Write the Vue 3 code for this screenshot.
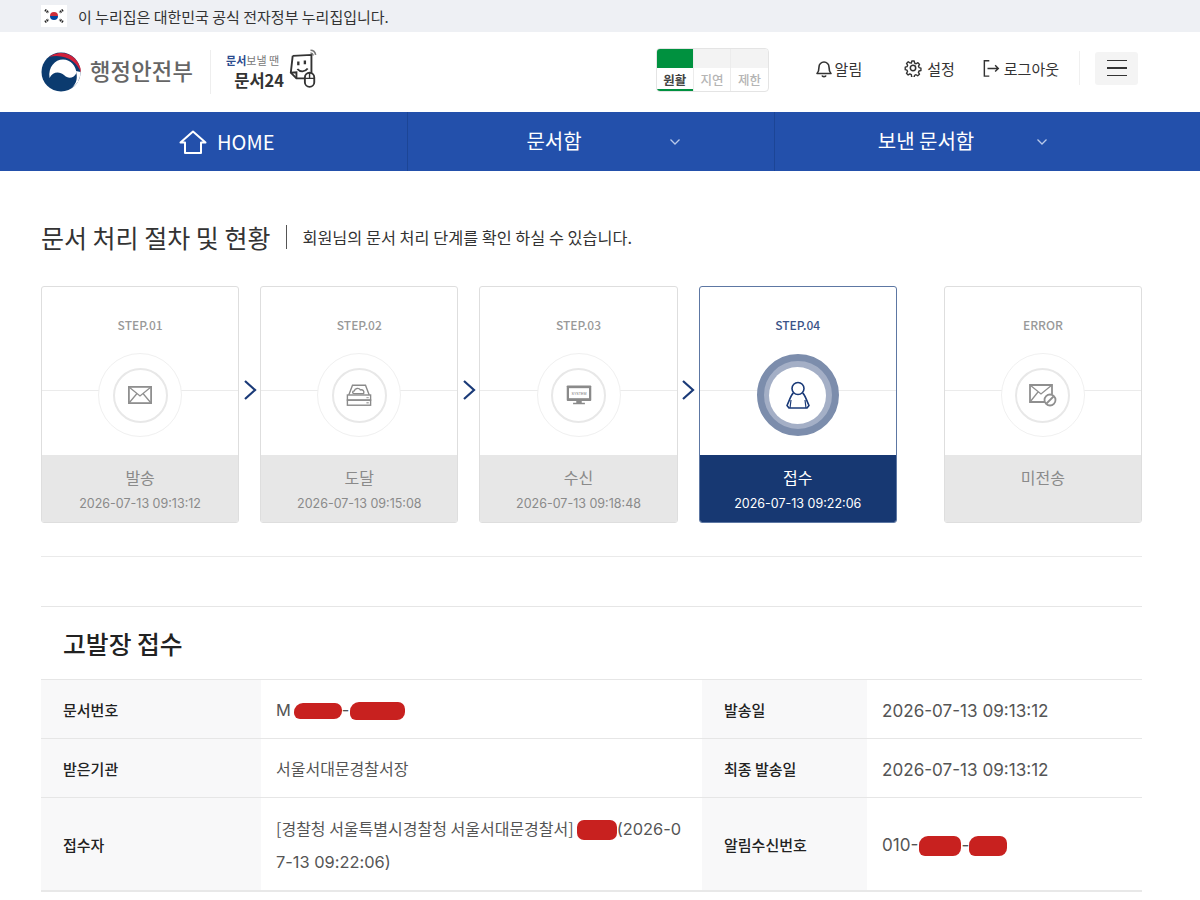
<template>
  <div class="page">
    <div class="gov-bar">
      <svg class="flag" viewBox="0 0 26 22" width="26" height="22">
        <rect width="26" height="22" fill="#fff" />
        <path d="M9 11a4 4 0 0 1 8 0z" fill="#cd2e3a" />
        <path d="M9 11a4 4 0 0 0 8 0z" fill="#0047a0" />
        <g stroke="#222" stroke-width="2.4" stroke-dasharray="1.4 .6">
          <path d="M4 5l3.5 2.5M4 17l3.5-2.5M22 5l-3.5 2.5M22 17l-3.5-2.5" />
        </g>
      </svg>
      <span>이 누리집은 대한민국 공식 전자정부 누리집입니다.</span>
    </div>

    <header class="header">
      <div class="brand">
        <svg class="mark" viewBox="0 0 40 40" width="40" height="40">
          <circle cx="20" cy="20" r="19.500" fill="#0b3b6f" />
          <path d="M8 5A20 20 0 0 1 40 21C37 11 25 1 8 5z" fill="#d0203a" />
          <path d="M8.500 26C7 15 14 7.500 22 7.500C30 7.500 35 14 35.500 21C32 27 27 27 23 23C19 19.500 12 19 8.500 26z" fill="#fff" />
          <path d="M35 19L39.500 20A19.500 19.500 0 0 1 30 36.500C36.500 31 36.500 25 35 19z" fill="#fff" />
        </svg>
        <span class="ministry">행정안전부</span>
        <i class="brand-sep"></i>
        <div class="doc-logo">
          <div class="doc-tag"><b>문서</b>보낼 땐</div>
          <div class="doc-name">문서24</div>
        </div>
        <svg class="doc-icon" viewBox="0 0 32 44" width="30" height="42">
          <g fill="none" stroke="#333" stroke-width="2">
            <path d="M5 8L25 7V28M18 32H9L3 26L5 8" />
            <path d="M3 26L9 25.500V32" />
            <path d="M10 22c3 3.500 8 3.500 11-.5" />
            <rect x="18" y="26" width="10" height="15" rx="5" fill="#fff" />
            <path d="M23 26v6M18 32h10" stroke-width="1.500" />
          </g>
          <path d="M11 14v4M18 13v4" stroke="#333" stroke-width="2.500" />
          <path d="M24 2c3 0 5 2 5.500 5M24 5c1.500 0 2.500 1 3 2.500" fill="none" stroke="#777" stroke-width="1.700" />
        </svg>
      </div>

      <div class="tools">
        <div class="status">
          <div v-for="(s, i) in statusList" :key="s" class="status-col" :class="{ on: i === 0 }">
            <i></i>
            <span>{{ s }}</span>
          </div>
        </div>
        <a class="tool tool-bell">
          <svg viewBox="0 0 18 20" width="18" height="20" fill="none" stroke="#333" stroke-width="1.600">
            <path d="M2 15.500c1.500-1.500 2-3 2-6.500a5 5 0 0 1 10 0c0 3.500.5 5 2 6.500z" stroke-linejoin="round" />
            <path d="M7 17.500c.5 1.500 3.500 1.500 4 0" />
          </svg>
          알림
        </a>
        <a class="tool tool-gear">
          <svg viewBox="0 0 20 20" width="18" height="18" fill="none" stroke="#333" stroke-width="1.700">
            <circle cx="10" cy="10" r="3" />
            <path d="M8.500 1.500h3l.5 2.500 1.800.8 2.200-1.300 2 2.200-1.300 2.100.7 1.700 2.300.6v3l-2.400.6-.7 1.700 1.300 2.100-2.200 2-2-1.300-1.800.8-.5 2.400h-3L8 18l-1.800-.8-2.100 1.300-2.100-2.100L3.300 14.300 2.600 12.600.5 12V9l2.200-.6.7-1.800L2.100 4.500l2.100-2.100 2 1.300L8 3.900z" transform="translate(.9 .9) scale(.91)" stroke-linejoin="round" />
          </svg>
          설정
        </a>
        <a class="tool tool-out">
          <svg viewBox="0 0 20 20" width="18" height="20" fill="none" stroke="#333" stroke-width="1.600">
            <path d="M7 2H1.500v17H7" />
            <path d="M5 10.500h12M13.500 7l3.500 3.500L13.500 14" />
          </svg>
          로그아웃
        </a>
        <i class="tool-sep"></i>
        <button class="menu-btn" type="button"><i></i><i></i><i></i></button>
      </div>
    </header>

    <nav class="nav">
      <a class="nav-item nav-home">
        <svg viewBox="0 0 28 24" width="28" height="24" fill="none" stroke="#fff" stroke-width="2">
          <path d="M1.500 12.500L14 1.500l12.500 11H22V23H6V12.500z" stroke-linejoin="round" />
        </svg>
        <span>HOME</span>
      </a>
      <a v-for="item in navItems" :key="item" class="nav-item">
        <span class="nav-label">{{ item }}</span>
        <svg viewBox="0 0 12 8" width="12" height="8" fill="none" stroke="#b9c9ea" stroke-width="1.300">
          <path d="M1.500 1.500L6 6l4.500-4.500" />
        </svg>
      </a>
    </nav>

    <main class="content">
      <div class="page-head">
        <h1>문서 처리 절차 및 현황</h1>
        <p>회원님의 문서 처리 단계를 확인 하실 수 있습니다.</p>
      </div>

      <section class="steps">
        <template v-for="(step, i) in steps" :key="step.code">
          <div v-if="i > 0" class="step-gap" :class="{ wide: step.code === 'ERROR' }">
            <svg v-if="step.code !== 'ERROR'" viewBox="0 0 14 20" width="14" height="20" fill="none" stroke="#1a3a78" stroke-width="2.200">
              <path d="M2 1l10 9-10 9" />
            </svg>
          </div>
          <article class="card" :class="{ active: step.active }">
            <div class="card-top">
              <div class="step-code">{{ step.code }}</div>
              <div class="rule"></div>
              <div class="orbit">
                <div class="core">
                  <svg v-if="step.icon === 'mail'" viewBox="0 0 24 18" width="24" height="18" fill="none" stroke="#8f8f8f" stroke-width="1.800">
                    <rect x=".9" y=".9" width="22.200" height="16.200" />
                    <path d="M1 1l11 9 11-9M1 17l8-9.500M23 17l-8-9.500" stroke-width="1.300" />
                  </svg>
                  <svg v-else-if="step.icon === 'tray'" viewBox="0 0 28 24" width="26" height="24" fill="none" stroke="#8a8a8a" stroke-width="1.500">
                    <path d="M3 12L7 1.500h14L25 12" />
                    <path d="M9 10.500c-2.500 0-2.500-3 0-3 .5-3 5-3.500 6.500-1 2.500-.5 4.500 1 3.500 4z" />
                    <rect x="1.500" y="12" width="25" height="5.500" />
                    <rect x="1.500" y="17.500" width="25" height="5.500" />
                    <path d="M22 14.800h2.500M22 20.300h2.500" stroke="#aaa" stroke-width="1.500" />
                  </svg>
                  <svg v-else-if="step.icon === 'system'" viewBox="0 0 28 22" width="26" height="20">
                    <rect x=".5" y=".5" width="27" height="17" rx="1" fill="#8a8a8a" />
                    <rect x="3" y="3.500" width="22" height="11" fill="#fff" />
                    <text x="14" y="10.500" class="screen-text" text-anchor="middle">SYSTEM</text>
                    <path d="M11 17.500h6v2h-6zM7.500 19.500h13v1.700h-13z" fill="#8a8a8a" />
                  </svg>
                  <svg v-else-if="step.icon === 'person'" viewBox="0 0 26 28" width="26" height="28" fill="none" stroke="#1a3a78" stroke-width="1.600">
                    <circle cx="13" cy="7.500" r="6" />
                    <path d="M8.500 12c-2.500 1.500-3 5-6.500 12.500l2 2.500h18l2-2.500C20.500 17 20 13.500 17.500 12" stroke-linejoin="round" />
                    <path d="M6 19l-1 8M20 19l1 8" stroke-width="1.200" />
                  </svg>
                  <svg v-else viewBox="0 0 30 24" width="30" height="24" fill="none" stroke="#8f8f8f" stroke-width="1.800">
                    <path d="M18 19H2V2h22v9" />
                    <path d="M2 2l11 9 11-9M2 19l8-10" stroke-width="1.300" />
                    <circle cx="22" cy="17" r="5.500" fill="#fff" />
                    <path d="M18.500 20.500l7-7" />
                  </svg>
                </div>
              </div>
            </div>
            <div class="card-bottom">
              <div class="step-name">{{ step.name }}</div>
              <div v-if="step.date" class="step-date">{{ step.date }}</div>
            </div>
          </article>
        </template>
      </section>

      <div class="divider"></div>

      <section class="detail">
        <h2>고발장 접수</h2>
        <div class="info">
          <div class="label">문서번호</div>
          <div class="value"><span>M<i class="mask mask-a"></i>-<i class="mask mask-b"></i></span></div>
          <div class="label">발송일</div>
          <div class="value date">2026-07-13 09:13:12</div>

          <div class="label">받은기관</div>
          <div class="value kr">서울서대문경찰서장</div>
          <div class="label">최종 발송일</div>
          <div class="value date">2026-07-13 09:13:12</div>

          <div class="label">접수자</div>
          <div class="value value-long"><span class="kr">[경찰청 서울특별시경찰청 서울서대문경찰서]</span><i class="mask mask-c"></i>(2026-0<br />7-13 09:22:06)</div>
          <div class="label">알림수신번호</div>
          <div class="value date"><span>010-<i class="mask mask-d"></i>-<i class="mask mask-e"></i></span></div>
        </div>
      </section>
    </main>
  </div>
</template>

<script setup>
const statusList = ['원활', '지연', '제한']
const navItems = ['문서함', '보낸 문서함']

const steps = [
  { code: 'STEP.01', name: '발송', date: '2026-07-13 09:13:12', icon: 'mail' },
  { code: 'STEP.02', name: '도달', date: '2026-07-13 09:15:08', icon: 'tray' },
  { code: 'STEP.03', name: '수신', date: '2026-07-13 09:18:48', icon: 'system' },
  { code: 'STEP.04', name: '접수', date: '2026-07-13 09:22:06', icon: 'person', active: true },
  { code: 'ERROR', name: '미전송', date: '', icon: 'error' }
]
</script>

<style>
html,
body {
  margin: 0;
  background: #fff;
}
</style>

<style scoped>
.page {
  width: 1200px;
  font-family: "Noto Sans CJK KR", "Noto Sans", sans-serif;
  color: #333;
}

.gov-bar {
  height: 32px;
  background: #eef0f4;
  padding-left: 41px;
  display: flex;
  align-items: center;
  gap: 11px;
  font-size: 15px;
  color: #333;
}

.header {
  height: 80px;
  box-sizing: border-box;
  padding: 0 62px 4px 41px;
  display: flex;
  align-items: center;
  justify-content: space-between;
}

.brand {
  display: flex;
  align-items: center;
  margin-top: 3px;
}

.ministry {
  margin: 0 0 3px 9px;
  font-size: 22.200px;
  font-weight: 500;
  color: #666;
  letter-spacing: .2px;
}

.brand-sep {
  width: 1px;
  height: 44px;
  background: #eee;
  margin: 0 15px 0 17px;
}

.doc-logo {
  width: 58px;
  padding-right: 4px;
  text-align: right;
}

.doc-tag {
  font-size: 11px;
  line-height: 15px;
  color: #777;
  white-space: nowrap;
  margin-bottom: 2px;
  text-align: left;
}

.doc-tag b {
  color: #2c4b8e;
  font-weight: 700;
}

.doc-name {
  font-size: 16.500px;
  line-height: 20px;
  font-weight: 700;
  color: #333;
}

.doc-icon {
  margin: -6px 0 0 0;
}

.tools {
  display: flex;
  align-items: center;
}

.status {
  display: flex;
  width: 113px;
  height: 44px;
  box-sizing: border-box;
  border: 1px solid #e4e4e4;
  border-radius: 4px;
  overflow: hidden;
  margin-right: 46px;
}

.status-col {
  flex: 1;
  display: flex;
  flex-direction: column;
  align-items: center;
  border-left: 1px solid #ececec;
  font-size: 12.500px;
  font-weight: 500;
  color: #b5b5b5;
}

.status-col:first-child {
  border-left: 0;
}

.status-col i {
  align-self: stretch;
  height: 19px;
  background: #f3f3f3;
  flex: none;
}

.status-col span {
  line-height: 24px;
}

.status-col.on {
  color: #444;
  font-weight: 700;
  border-bottom: 2px solid #00913f;
}

.status-col.on i {
  background: #00913f;
}

.tool {
  display: flex;
  align-items: center;
  font-size: 15px;
  color: #333;
  white-space: nowrap;
  margin-bottom: 4px;
}

.tool-bell {
  gap: 2px;
  margin-right: 42px;
}

.tool-gear {
  gap: 5px;
  margin-right: 28px;
}

.tool-out {
  gap: 3px;
}

.tool-sep {
  width: 1px;
  height: 34px;
  background: #f0f0f0;
  margin: 0 15px 4px 20px;
}

.menu-btn {
  width: 43px;
  height: 33px;
  border: 0;
  border-radius: 3px;
  background: #f4f4f4;
  display: flex;
  flex-direction: column;
  justify-content: center;
  align-items: center;
  gap: 6px;
  padding: 0;
  margin-bottom: 4px;
}

.menu-btn i {
  width: 20px;
  height: 1.500px;
  background: #333;
}

.nav {
  height: 59px;
  background: #2350ab;
  display: grid;
  grid-template-columns: 407px 367px 1fr;
  color: #fff;
  font-size: 20px;
}

.nav-item {
  display: flex;
  align-items: center;
  border-left: 1px solid #1c4596;
}

.nav-item:first-child {
  border-left: 0;
}

.nav-home {
  padding-left: 179px;
  gap: 10px;
}

.nav-label {
  width: 230px;
  margin: 0 0 3px 31px;
  text-align: center;
}

.nav-item:last-child .nav-label {
  width: 220px;
  margin-left: 41px;
}

.content {
  padding: 0 58px 0 41px;
}

.page-head {
  display: flex;
  align-items: center;
  height: 36px;
  padding: 48px 0 31px;
}

.page-head h1 {
  margin: 0;
  padding-right: 16px;
  font-size: 25px;
  font-weight: 400;
  color: #333;
  letter-spacing: 0;
}

.page-head p {
  margin: 0;
  padding-left: 15px;
  border-left: 1px solid #555;
  font-size: 16.300px;
  line-height: 24px;
  color: #333;
}

.steps {
  display: flex;
  height: 237px;
}

.step-gap {
  flex: 0 0 21px;
  padding-top: 94px;
  display: flex;
  justify-content: center;
  align-items: flex-start;
}

.step-gap.wide {
  flex-basis: 47px;
}

.card {
  flex: 1;
  min-width: 0;
  display: flex;
  flex-direction: column;
  box-sizing: border-box;
  border: 1px solid #dedede;
  border-radius: 3px;
  overflow: hidden;
}

.card-top {
  position: relative;
  height: 168px;
  flex: none;
  text-align: center;
}

.step-code {
  padding-top: 30px;
  font-size: 12px;
  line-height: 16px;
  font-weight: 500;
  color: #999;
}

.rule {
  position: absolute;
  left: 0;
  right: 0;
  top: 103px;
  height: 1px;
  background: #ebebeb;
}

.orbit {
  position: relative;
  width: 84px;
  height: 84px;
  box-sizing: border-box;
  margin: 20px auto 0;
  border: 1px solid #f0f0f0;
  border-radius: 50%;
  background: #fff;
  display: flex;
  align-items: center;
  justify-content: center;
}

.core {
  width: 55px;
  height: 55px;
  box-sizing: border-box;
  border: 2px solid #e8e8e8;
  border-radius: 50%;
  background: #fff;
  display: flex;
  align-items: center;
  justify-content: center;
}

.screen-text {
  font-family: "Liberation Sans", sans-serif;
  font-size: 4px;
  fill: #777;
}

.card-bottom {
  flex: 1;
  background: #e7e7e7;
  text-align: center;
  color: #8a8a8a;
  padding-top: 10px;
}

.step-name {
  font-size: 16px;
  line-height: 24px;
}

.step-date {
  margin-top: 5px;
  font-family: Inter, "Noto Sans CJK KR", sans-serif;
  font-size: 12.500px;
  line-height: 20px;
}

.card.active {
  border-color: #5d77a3;
}

.card.active .step-code {
  color: #3b5488;
}

.card.active .orbit {
  width: 82px;
  height: 82px;
  margin-top: 21px;
  border: 7px solid #7c8dac;
  background: #a4afc6;
}

.card.active .core {
  width: 57px;
  height: 57px;
  border: 0;
}

.card.active .card-bottom {
  background: #173872;
  color: #fff;
}

.divider {
  height: 1px;
  background: #eaeaea;
  margin-top: 33px;
}

.detail {
  margin-top: 49px;
  border-top: 1px solid #e6e6e6;
}

.detail h2 {
  margin: 0;
  height: 72px;
  line-height: 72px;
  padding-left: 22px;
  font-size: 24.800px;
  font-weight: 500;
  color: #222;
}

.info {
  display: grid;
  grid-template-columns: 220px 441px 165px 1fr;
  grid-template-rows: 59px 59px 92px;
  border-top: 1px solid #e6e6e6;
  border-bottom: 2px solid #e8e8e8;
}

.label,
.value {
  display: flex;
  align-items: center;
  border-bottom: 1px solid #e6e6e6;
}

.label {
  padding-left: 22px;
  background: #f8f8f9;
  font-size: 15px;
  font-weight: 500;
  color: #222;
}

.value {
  box-sizing: border-box;
  padding: 2px 0 0 15px;
  font-family: Inter, "Noto Sans CJK KR", sans-serif;
  font-size: 16.400px;
  color: #555;
}

.value.date {
  font-size: 17.100px;
}

.kr {
  font-family: "Noto Sans CJK KR", sans-serif;
  font-size: 16px;
}

.value.kr {
  padding-top: 0;
}

.info > :nth-last-child(-n + 4) {
  border-bottom: 0;
}

.value-long {
  display: block;
  align-self: center;
  line-height: 33px;
  border-bottom: 0;
}

.mask {
  display: inline-block;
  height: 16px;
  background: #c8211f;
  border-radius: 9px 7px 8px 6px;
  vertical-align: middle;
}

.mask-a {
  width: 48px;
  margin-left: 3px;
}

.mask-b {
  width: 55px;
  height: 18px;
  margin-left: 1px;
}

.mask-c {
  width: 40px;
  height: 20px;
  border-radius: 7px;
  margin-left: 3px;
}

.mask-d {
  width: 42px;
  height: 20px;
  margin-left: 1px;
}

.mask-e {
  width: 38px;
  height: 20px;
}
</style>
